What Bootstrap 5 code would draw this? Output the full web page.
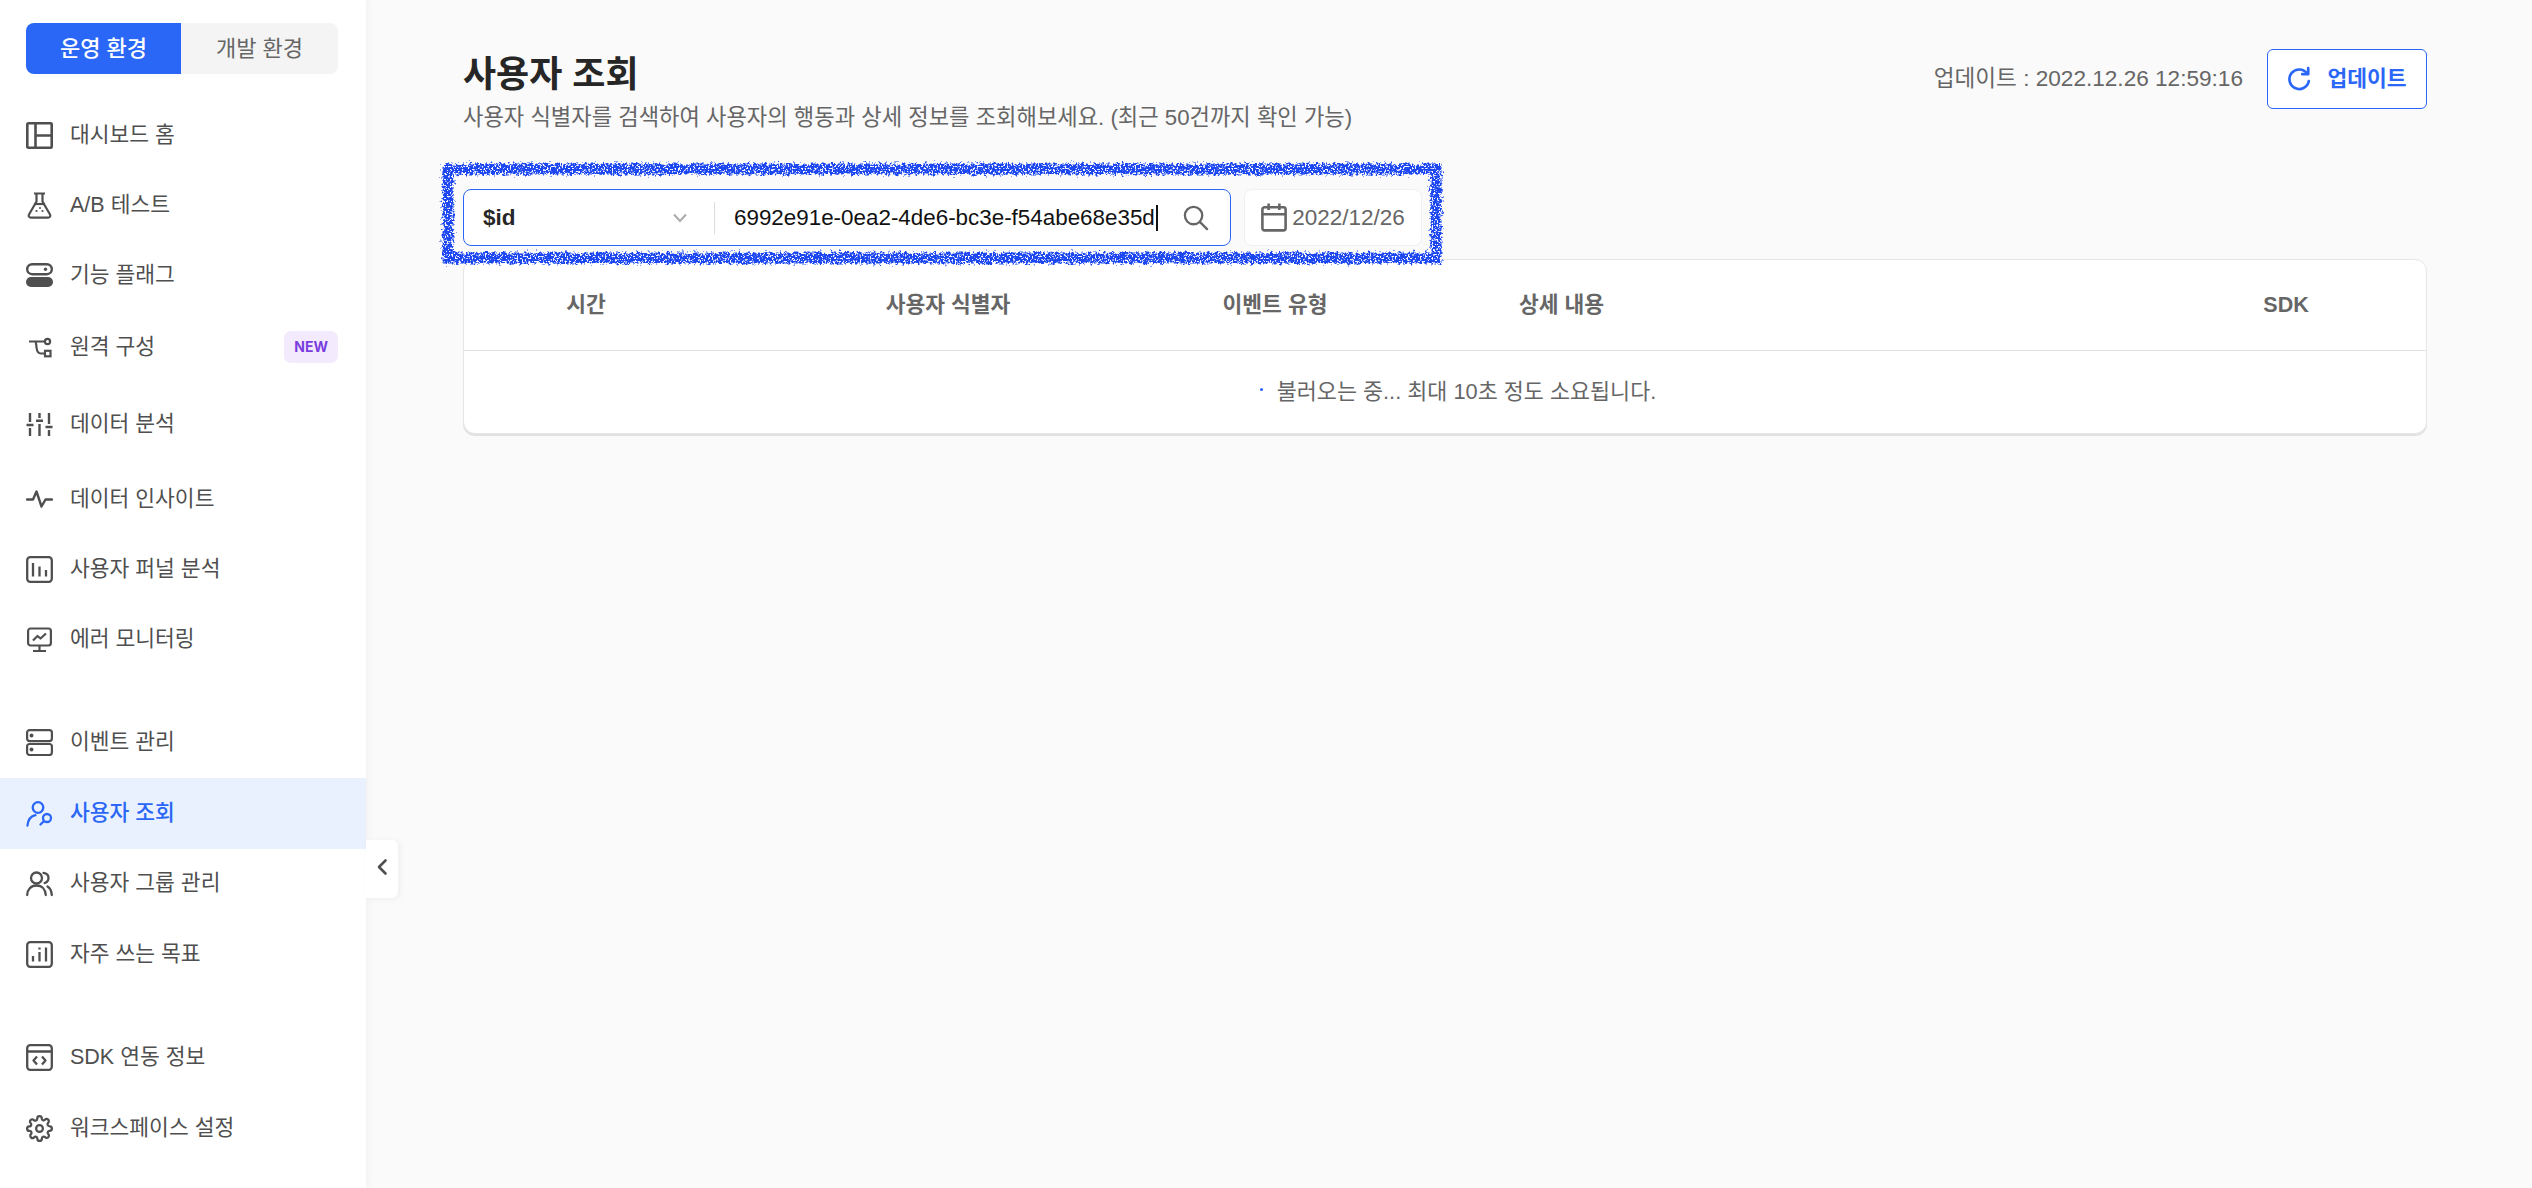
<!DOCTYPE html>
<html lang="ko">
<head>
    <meta charset="UTF-8">
    <meta name="viewport" content="width=device-width, initial-scale=1.0">
    <title>사용자 조회</title>
    <link rel="stylesheet" href="https://cdn.jsdelivr.net/npm/bootstrap@5.3.2/dist/css/bootstrap.min.css">
    <style>
        html, body { height: 100%; }
        body {
            font-family: "Liberation Sans", "Noto Sans CJK KR", sans-serif;
            background: #fafafa;
            color: #4f4f4f;
            overflow: hidden;
        }
        .side-panel {
            width: 366px;
            flex: 0 0 366px;
            background: #fff;
            box-shadow: 2px 0 8px rgba(0, 0, 0, .04);
            padding-top: 23px;
            position: relative;
        }
        .env-toggle { margin: 0 28px 26px 26px; height: 51px; border-radius: 8px; overflow: hidden; }
        .env-toggle div { display: flex; align-items: center; justify-content: center; font-size: 22px; }
        .env-live { width: 155px; background: #2b67f6; color: #fff; font-weight: 500; }
        .env-dev { flex: 1; background: #f4f4f4; color: #666; }
        .side-item {
            height: 70px;
            padding: 0 26px;
            display: flex;
            align-items: center;
            gap: 17px;
            font-size: 21.5px;
            color: #4f4f4f;
            text-decoration: none;
        }
        .side-item svg { width: 27px; height: 27px; flex: 0 0 27px; }
        .side-item.on { background: #eaf1fe; color: #2b67f6; font-weight: 500; height: 71px; }
        .nudge-back { margin-top: -1px; }
        .nudge-1 { margin-top: 1px; }
        .nudge-2 { margin-top: 2px; }
        .nudge-5 { margin-top: 5px; }
        .nudge-7 { margin-top: 7px; }
        .nudge-33 { margin-top: 33px; }
        .new-tag {
            margin-left: auto;
            margin-right: 2px;
            background: #f3ebfd;
            color: #7b3fe0;
            font-family: Inter, sans-serif;
            font-size: 14px;
            font-weight: 700;
            line-height: 32px;
            padding: 0 10px;
            border-radius: 7px;
        }
        .fold-btn {
            position: absolute;
            left: 366px;
            top: 840px;
            width: 32px;
            height: 58px;
            padding-bottom: 4px;
            background: #fff;
            border-radius: 0 6px 6px 0;
            box-shadow: 2px 1px 6px rgba(0, 0, 0, .05);
            display: flex;
            align-items: center;
            justify-content: center;
        }
        .page-body { padding: 0 105px 0 97px; flex: 1; min-width: 0; }
        .page-head { height: 189px; padding-top: 49px; }
        .page-title { font-size: 36px; font-weight: 700; color: #262626; line-height: 50px; margin: 1px 0 3px; }
        .page-desc { font-size: 22.2px; color: #666; line-height: 30px; margin: 0; }
        .update-time { font-size: 22.6px; color: #666; white-space: nowrap; }
        .update-btn {
            width: 160px;
            height: 60px;
            color: #2b67f6;
            border: 1.5px solid #2b67f6;
            border-radius: 6px;
            background: #fff;
            font-size: 21.5px;
            font-weight: 700;
            padding: 0;
            display: flex;
            align-items: center;
            justify-content: center;
            gap: 16px;
        }
        .search-row { position: relative; height: 57px; margin-bottom: 13px; }
        .search-box {
            width: 768px;
            background: #fff;
            border: 1.5px solid #2b67f6;
            border-radius: 8px;
        }
        .key-select { width: 250px; padding: 0 26px 0 19px; font-size: 22.5px; font-weight: 700; color: #262626; }
        .key-sep { width: 1px; height: 32px; background: #ddd; }
        .key-input {
            flex: 0 0 441px;
            border: 0;
            outline: 0;
            padding: 0 0 0 19px;
            font-size: 22.4px;
            color: #111;
            background: transparent;
        }
        .caret-bar { width: 1.5px; height: 26px; background: #111; }
        .search-glyph { margin-right: 21px; }
        .date-box {
            width: 178px;
            margin-left: 13px;
            background: #fff;
            border: 1px solid #f0f0f0;
            border-radius: 8px;
            color: #666;
            font-size: 22.5px;
            gap: 5px;
        }
        .scribble { position: absolute; left: -21px; top: -26px; width: 1000px; height: 101px; overflow: visible; pointer-events: none; }
        .log-card { border: 1px solid #e6e6e6; border-radius: 12px; background: #fff; box-shadow: 0 2px 0 #e2e2e2; overflow: hidden; height: 175px; }
        .log-table { table-layout: fixed; margin: 0; }
        .log-table th {
            height: 90px;
            font-size: 21.5px;
            font-weight: 600;
            color: #666;
            text-align: center;
            vertical-align: middle;
            border-bottom: 1px solid #e2e2e2;
            padding: 0;
        }
        .log-table td {
            height: 84px;
            font-size: 21.8px;
            color: #666;
            text-align: center;
            vertical-align: middle;
            border: 0;
            padding: 0 0 0 26px;
        }
        .log-table th.detail-col { text-align: left; padding-left: 157px; }
        .c-time { width: 244px; }
        .c-id { width: 480px; }
        .c-type { width: 174px; }
        .c-detail { width: 784px; }
        .load-dot { display: inline-block; width: 3px; height: 3px; border-radius: 50%; background: #2b67f6; margin-right: 14px; vertical-align: 8px; }
    </style>
</head>
<body class="d-flex">
    <aside class="side-panel">
        <div class="env-toggle d-flex">
            <div class="env-live">운영 환경</div>
            <div class="env-dev">개발 환경</div>
        </div>
        <nav class="d-flex flex-column">
            <a class="side-item" href="#">
                <svg viewBox="0 0 27 27" fill="none" stroke="#4f4f4f" stroke-width="2.6"><rect x="1.3" y="1.3" width="24.4" height="24.4" rx="1"/><path d="M9.5 1.3v24.4M9.5 13.5h16.2"/></svg>
                대시보드 홈</a>
            <a class="side-item" href="#">
                <svg viewBox="0 0 27 27" fill="none" stroke="#4f4f4f" stroke-width="2.2" stroke-linejoin="round"><path d="M8 1.5h11M10.5 1.5v8L3 22.5c-.9 1.7.2 3.2 2 3.2h17c1.8 0 2.9-1.5 2-3.2L16.5 9.5v-8"/><path d="M8 12h11"/><circle cx="10.5" cy="19" r="1.1" fill="#4f4f4f" stroke="none"/><circle cx="16.5" cy="19" r="1.1" fill="#4f4f4f" stroke="none"/><circle cx="14" cy="16" r="1" fill="#4f4f4f" stroke="none"/></svg>
                A/B 테스트</a>
            <a class="side-item" href="#">
                <svg viewBox="0 0 27 27" fill="none"><rect x="1.2" y="2.2" width="24.6" height="10" rx="5" stroke="#4f4f4f" stroke-width="2.4"/><circle cx="19.5" cy="7.2" r="1.7" fill="#4f4f4f"/><rect y="15" width="27" height="10" rx="5" fill="#4f4f4f"/></svg>
                기능 플래그</a>
            <a class="side-item nudge-2" href="#">
                <svg viewBox="0 0 27 27" fill="none" stroke="#4f4f4f" stroke-width="2.2"><path d="M3 7.5h16.5M8.5 7.5c2 0 1.6 2.5 2 6 .4 3.5 1.5 6 4.5 6h4"/><circle cx="21.5" cy="7.5" r="2.6"/><rect x="19" y="16.8" width="5.5" height="5.5"/></svg>
                원격 구성<span class="new-tag">NEW</span></a>
            <a class="side-item nudge-7" href="#">
                <svg viewBox="0 0 27 27" fill="none" stroke="#4f4f4f" stroke-width="2.4"><path d="M4 2v9M4 17v8M13.5 2v5M13.5 13v12M23 2v11M23 19v6M.5 14h7M10 9.8h7M19.5 16h7"/></svg>
                데이터 분석</a>
            <a class="side-item nudge-5" href="#">
                <svg viewBox="0 0 27 27" fill="none" stroke="#4f4f4f" stroke-width="2.4" stroke-linejoin="round" stroke-linecap="round"><path d="M1 13.5h6l3.5-8 5 15 4-7h6.5"/></svg>
                데이터 인사이트</a>
            <a class="side-item" href="#">
                <svg viewBox="0 0 27 27" fill="none" stroke="#4f4f4f" stroke-width="2.3"><rect x="1.2" y="1.2" width="24.6" height="24.6" rx="3"/><path d="M7 7v13.5M13.5 10.5v10M20 14v6.5"/></svg>
                사용자 퍼널 분석</a>
            <a class="side-item" href="#">
                <svg viewBox="0 0 27 27" fill="none" stroke="#4f4f4f" stroke-width="2.2" stroke-linejoin="round"><rect x="2.1" y="2.5" width="22.8" height="17" rx="2.5"/><path d="M13.5 19.5v5M7 25h13M7 14.5l4.5-4.500 3 2.500L20 7.5"/></svg>
                에러 모니터링</a>
            <a class="side-item nudge-33" href="#">
                <svg viewBox="0 0 27 27" fill="none" stroke="#4f4f4f" stroke-width="2.2"><rect x="1.1" y="1.1" width="24.8" height="11" rx="2.5"/><rect x="1.1" y="15" width="24.8" height="11" rx="2.5"/><circle cx="5.5" cy="6.6" r=".9" fill="#4f4f4f"/><circle cx="5.5" cy="20.5" r=".9" fill="#4f4f4f"/></svg>
                이벤트 관리</a>
            <a class="side-item on nudge-1" href="#">
                <svg viewBox="0 0 27 27" fill="none" stroke="#2b67f6" stroke-width="2.3" stroke-linecap="round"><circle cx="12" cy="7.5" r="5.3"/><path d="M1.5 25.5c.6-6 3.6-9.5 8-10.3"/><circle cx="21" cy="18" r="4"/><path d="M18 21l-3.500 3.500"/></svg>
                사용자 조회</a>
            <a class="side-item nudge-back" href="#">
                <svg viewBox="0 0 27 27" fill="none" stroke="#4f4f4f" stroke-width="2.3" stroke-linecap="round"><circle cx="10.5" cy="8" r="5.5"/><path d="M1.2 25c0-5.5 3.800-9.500 9.300-9.500s9 4 9.300 9.500M17.500 2.800c3 .4 5 2.500 5 5.200 0 2.400-1.500 4.300-3.800 5M21.500 16.500c2.600 1.500 4 4.500 4.300 8.500"/></svg>
                사용자 그룹 관리</a>
            <a class="side-item nudge-1" href="#">
                <svg viewBox="0 0 27 27" fill="none" stroke="#4f4f4f" stroke-width="2.3"><rect x="1.2" y="1.2" width="24.6" height="24.6" rx="3"/><path d="M7 15v5.500M13.500 11v9.500M20 6.500v14M13.500 6.500v2"/></svg>
                자주 쓰는 목표</a>
            <a class="side-item nudge-33" href="#">
                <svg viewBox="0 0 27 27" fill="none" stroke="#4f4f4f" stroke-width="2.3" stroke-linejoin="round"><rect x="1.2" y="1.2" width="24.6" height="24.6" rx="3"/><path d="M1.2 7.500h24.600M11 12.500l-3.500 4 3.500 4M16 12.500l3.500 4-3.500 4"/></svg>
                SDK 연동 정보</a>
            <a class="side-item nudge-1" href="#">
                <svg viewBox="0 0 24 24" fill="none" stroke="#4f4f4f" stroke-width="2" stroke-linejoin="round"><circle cx="12" cy="12" r="3"/><path d="M19.4 15a1.65 1.65 0 0 0 .33 1.82l.06.06a2 2 0 1 1-2.83 2.83l-.06-.06a1.65 1.65 0 0 0-2.8 1.17V21a2 2 0 1 1-4 0v-.09a1.65 1.65 0 0 0-2.82-1.11l-.06.06a2 2 0 1 1-2.83-2.83l.06-.06a1.65 1.65 0 0 0-1.17-2.8H3a2 2 0 1 1 0-4h.09a1.65 1.65 0 0 0 1.11-2.82l-.06-.06a2 2 0 1 1 2.83-2.83l.06.06a1.65 1.65 0 0 0 1.82.33H9a1.65 1.65 0 0 0 1-1.51V3a2 2 0 1 1 4 0v.09a1.65 1.65 0 0 0 2.82 1.11l.06-.06a2 2 0 1 1 2.83 2.83l-.06.06a1.65 1.65 0 0 0-.33 1.82V9a1.65 1.65 0 0 0 1.51 1H21a2 2 0 1 1 0 4h-.09a1.65 1.65 0 0 0-1.51 1z"/></svg>
                워크스페이스 설정</a>
        </nav>
        <div class="fold-btn">
            <svg width="12" height="18" viewBox="0 0 12 18" fill="none" stroke="#4f4f4f" stroke-width="2.6" stroke-linecap="round" stroke-linejoin="round"><path d="M9.5 2.500L3 9l6.500 6.500"/></svg>
        </div>
    </aside>

    <main class="page-body">
        <header class="page-head d-flex justify-content-between align-items-start">
            <div>
                <h1 class="page-title">사용자 조회</h1>
                <p class="page-desc">사용자 식별자를 검색하여 사용자의 행동과 상세 정보를 조회해보세요. (최근 50건까지 확인 가능)</p>
            </div>
            <div class="d-flex align-items-center gap-4">
                <span class="update-time">업데이트 : 2022.12.26 12:59:16</span>
                <button class="update-btn" type="button">
                    <svg width="24" height="26" viewBox="0 0 22 24" fill="none" stroke="#2b67f6" stroke-width="2.5" stroke-linecap="round" stroke-linejoin="round"><path d="M18.500 7A9 9 0 1 0 20 14"/><path d="M19.500 2v5.500H14"/></svg>
                    업데이트
                </button>
            </div>
        </header>

        <div class="search-row d-flex">
            <div class="search-box d-flex align-items-center">
                <div class="key-select d-flex align-items-center justify-content-between">
                    <span>$id</span>
                    <svg width="16" height="10" viewBox="0 0 16 10" fill="none" stroke="#aaa" stroke-width="2"><path d="M2 1.500l6 6.500 6-6.500"/></svg>
                </div>
                <div class="key-sep"></div>
                <input class="key-input" type="text" value="6992e91e-0ea2-4de6-bc3e-f54abe68e35d">
                <div class="caret-bar"></div>
                <svg class="ms-auto search-glyph" width="27" height="27" viewBox="0 0 28 28" fill="none" stroke="#666" stroke-width="2.4" stroke-linecap="round"><circle cx="12" cy="12" r="9"/><path d="M19 19l7 7"/></svg>
            </div>
            <div class="date-box d-flex align-items-center justify-content-center">
                <svg width="26" height="29" viewBox="0 0 24 27" fill="none" stroke="#666" stroke-width="2.4"><rect x="1.2" y="4" width="21.6" height="21.5" rx="2"/><path d="M1.2 10.5h21.6M7 .5v6M17 .5v6"/></svg>
                <span>2022/12/26</span>
            </div>
            <svg class="scribble" viewBox="0 0 1000 101" fill="none">
                <defs>
                    <filter id="rough" x="-2%" y="-20%" width="104%" height="140%">
                        <feTurbulence type="fractalNoise" baseFrequency=".35" numOctaves="3" seed="4" result="noise"/>
                        <feDisplacementMap in="SourceGraphic" in2="noise" scale="9" result="moved"/>
                        <feTurbulence type="fractalNoise" baseFrequency=".6" numOctaves="2" seed="11"/>
                        <feColorMatrix values="0 0 0 0 0  0 0 0 0 0  0 0 0 0 0  0 0 0 -9 5.9" result="holes"/>
                        <feComposite in="moved" in2="holes" operator="in"/>
                    </filter>
                </defs>
                <path d="M6 6H994V95H6Z" stroke="#1a47f0" stroke-width="11" filter="url(#rough)"/>
            </svg>
        </div>

        <div class="log-card">
            <table class="table log-table">
                <colgroup>
                    <col class="c-time"><col class="c-id"><col class="c-type"><col class="c-detail"><col>
                </colgroup>
                <thead>
                    <tr>
                        <th>시간</th>
                        <th>사용자 식별자</th>
                        <th>이벤트 유형</th>
                        <th class="detail-col">상세 내용</th>
                        <th>SDK</th>
                    </tr>
                </thead>
                <tbody>
                    <tr><td colspan="5"><span class="load-dot"></span>불러오는 중... 최대 10초 정도 소요됩니다.</td></tr>
                </tbody>
            </table>
        </div>
    </main>
    <script src="https://cdn.jsdelivr.net/npm/bootstrap@5.3.2/dist/js/bootstrap.bundle.min.js"></script>
</body>
</html>
